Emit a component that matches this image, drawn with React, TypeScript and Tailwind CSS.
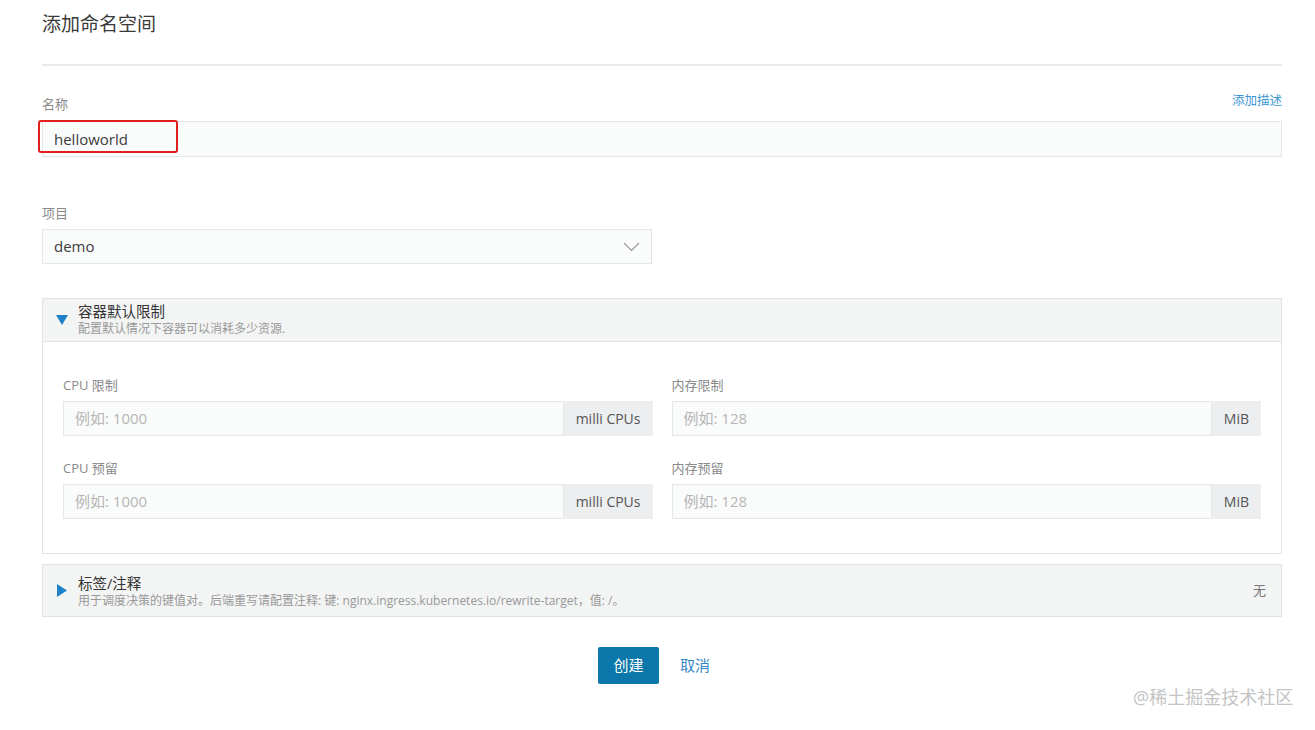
import React from "react";

const font = { fontFamily: '"Open Sans", "Noto Sans CJK SC", sans-serif' };

function Label({ children }: { children: React.ReactNode }) {
  return <div className="h-4 text-[13px] leading-4 text-[#8a8a8a]">{children}</div>;
}

function UnitInput({ placeholder, unit }: { placeholder: string; unit: string }) {
  return (
    <div className="mt-[8px] flex h-[35px]">
      <div className="flex flex-1 items-center border border-[#e4e6e7] bg-[#fafbfb] pl-[11px] text-[15px] text-[#b6b6b6]">
        {placeholder}
      </div>
      <div className="flex items-center bg-[#eceeef] px-[12px] text-[14px] text-[#555]">{unit}</div>
    </div>
  );
}

function Triangle({ open }: { open: boolean }) {
  return open ? (
    <svg width="12" height="10" viewBox="0 0 12 10" className="shrink-0">
      <polygon points="0,0 12,0 6,10" fill="#1e82c8" />
    </svg>
  ) : (
    <svg width="10" height="13" viewBox="0 0 10 13" className="shrink-0">
      <polygon points="0,0 10,6.5 0,13" fill="#1e82c8" />
    </svg>
  );
}

function HeaderText({ title, sub }: { title: string; sub: string }) {
  return (
    <div className="flex flex-col">
      <span className="text-[14.5px] leading-[19px] text-[#333]">{title}</span>
      <span className="text-[12px] leading-[15px] text-[#999]">{sub}</span>
    </div>
  );
}

export default function App() {
  return (
    <div className="relative min-h-[730px] w-full bg-white pl-[42px] pr-[33px]" style={font}>
      <div className="pt-[10px] text-[19px] leading-7 text-[#3a3a3a]">添加命名空间</div>
      <div className="mt-[26px] border-t-2 border-[#e9e9e9]" />

      <div className="mt-[30px] flex items-end justify-between">
        <Label>名称</Label>
        <span className="-translate-y-[3px] text-[12.5px] leading-4 text-[#3b97d3]">添加描述</span>
      </div>
      <div className="relative mt-[9px] flex h-[36px] items-center border border-[#e4e6e7] bg-[#fafbfb] pl-[11px] text-[15px] text-[#3c3c3c]">
        helloworld
        <div className="absolute left-[-5px] top-[-2px] h-[33px] w-[140px] rounded-[3px] border-2 border-[#e0201c]" />
      </div>

      <div className="mt-[48px]">
        <Label>项目</Label>
      </div>
      <div className="mt-[8px] flex h-[35px] w-[610px] items-center justify-between border border-[#e4e6e7] bg-[#fafbfb] pl-[11px] pr-[11px] text-[15px] text-[#3c3c3c]">
        demo
        <svg width="17" height="10" viewBox="0 0 17 10">
          <polyline points="1,1 8.5,8.5 16,1" fill="none" stroke="#9a9a9a" strokeWidth="1.2" />
        </svg>
      </div>

      <div className="mt-[34px] border border-[#e1e4e5]">
        <div className="flex h-[43px] items-center border-b border-[#e1e4e5] bg-[#f3f4f4] pl-[13px]">
          <Triangle open />
          <div className="ml-[10px] -translate-y-[1px]">
            <HeaderText title="容器默认限制" sub="配置默认情况下容器可以消耗多少资源." />
          </div>
        </div>
        <div className="grid grid-cols-2 gap-x-[19px] px-[20px] pb-[34px] pt-[35px]">
          <div>
            <Label>CPU 限制</Label>
            <UnitInput placeholder="例如: 1000" unit="milli CPUs" />
          </div>
          <div>
            <Label>内存限制</Label>
            <UnitInput placeholder="例如: 128" unit="MiB" />
          </div>
          <div className="mt-[24px]">
            <Label>CPU 预留</Label>
            <UnitInput placeholder="例如: 1000" unit="milli CPUs" />
          </div>
          <div className="mt-[24px]">
            <Label>内存预留</Label>
            <UnitInput placeholder="例如: 128" unit="MiB" />
          </div>
        </div>
      </div>

      <div className="mt-[10px] flex h-[53px] items-center border border-[#e1e4e5] bg-[#f3f4f4] pl-[14px] pr-[15px]">
        <Triangle open={false} />
        <div className="ml-[11px] flex-1">
          <HeaderText
            title="标签/注释"
            sub="用于调度决策的键值对。后端重写请配置注释: 键: nginx.ingress.kubernetes.io/rewrite-target，值: /。"
          />
        </div>
        <span className="text-[13px] text-[#777]">无</span>
      </div>

      <div className="mt-[30px] flex items-center justify-center gap-[21px] pr-[16px]">
        <button className="h-[37px] w-[61px] rounded-[2px] bg-[#0b77aa] text-[15px] text-white">创建</button>
        <span className="text-[15px] text-[#3a88c6]">取消</span>
      </div>

      <div className="absolute left-[1133px] top-[685px] text-[18px] leading-6 text-[#c4c4c4]">@稀土掘金技术社区</div>
    </div>
  );
}
